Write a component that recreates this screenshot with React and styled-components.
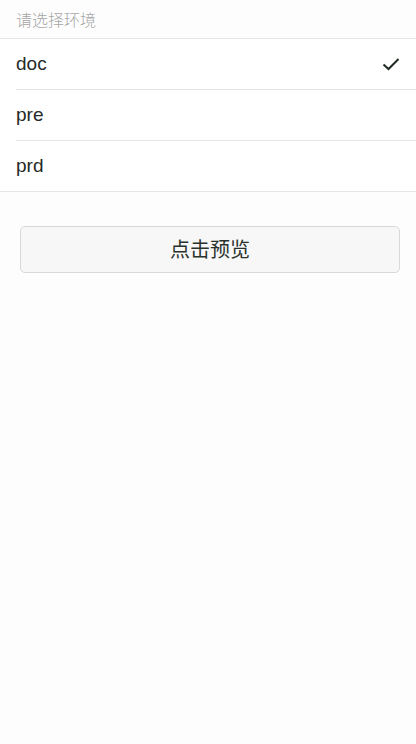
import React, { useState } from "react";
import styled, { createGlobalStyle } from "styled-components";

const GlobalStyle = createGlobalStyle`
  html, body {
    margin: 0;
    padding: 0;
    background: #fdfdfd;
  }
  body {
    font-family: "Liberation Sans", "Noto Sans CJK SC", sans-serif;
    color: #222;
  }
`;

const Page = styled.div`
  display: flex;
  flex-direction: column;
  min-height: 744px;
`;

const Title = styled.div`
  padding: 10px 16px 6px;
  font-size: 16px;
  line-height: 22px;
  font-weight: 300;
  color: #a6a6a6;
`;

const Cells = styled.div`
  background: #fff;
  border-top: 1px solid #e5e5e5;
  border-bottom: 1px solid #e5e5e5;
`;

const Cell = styled.label`
  display: flex;
  align-items: center;
  justify-content: space-between;
  height: 50px;
  margin-left: 16px;
  padding-right: 16px;
  font-size: 19px;
  color: #252a26;
  cursor: pointer;
  & + & {
    border-top: 1px solid #e5e5e5;
  }
`;

const Check = styled.svg`
  width: 18px;
  height: 14px;
  visibility: ${(p) => (p.$on ? "visible" : "hidden")};
`;

const Area = styled.div`
  padding: 34px 16px 0 20px;
`;

const Button = styled.button`
  display: block;
  width: 100%;
  height: 47px;
  padding: 0 0 2px;
  border: 1px solid #d8d8d8;
  border-radius: 5px;
  background: #f7f7f7;
  font-family: "Noto Sans CJK SC", sans-serif;
  font-size: 20px;
  color: #2a322c;
  cursor: pointer;
`;

const envs = ["doc", "pre", "prd"];

export default function App() {
  const [env, setEnv] = useState("doc");
  return (
    <Page>
      <GlobalStyle />
      <Title>请选择环境</Title>
      <Cells>
        {envs.map((e) => (
          <Cell key={e} onClick={() => setEnv(e)}>
            <span>{e}</span>
            <Check $on={env === e} viewBox="0 0 18 14">
              <path d="M1.5 7.5 L6.5 12 L16.5 2" fill="none" stroke="#1f2a22" strokeWidth="2" />
            </Check>
          </Cell>
        ))}
      </Cells>
      <Area>
        <Button>点击预览</Button>
      </Area>
    </Page>
  );
}
